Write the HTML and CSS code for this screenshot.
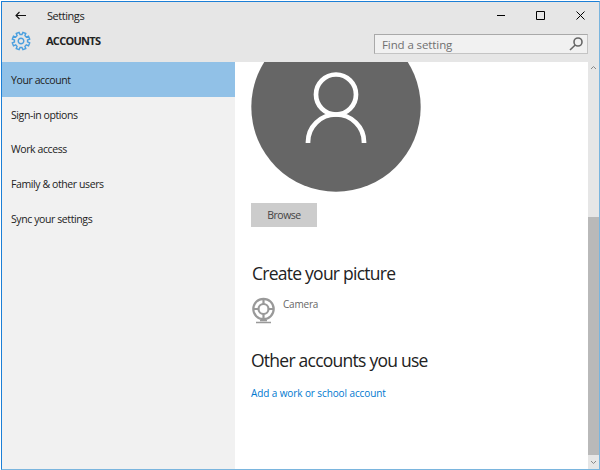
FILE: index.html
```html
<!DOCTYPE html>
<html lang="en">
<head>
<meta charset="utf-8">
<title>Settings</title>
<link rel="stylesheet" href="styles.css">
</head>
<body>
<div class="window">
  <header class="titlebar">
    <svg class="back" width="12" height="10" viewBox="0 0 12 10"><path d="M11 4.500H1M4.500 1L1 4.500l3.500 3.500"/></svg>
    <span class="title">Settings</span>
    <div class="controls">
      <svg width="10" height="10" viewBox="0 0 10 10"><path d="M1 4.500h8"/></svg>
      <svg width="10" height="10" viewBox="0 0 10 10"><path d="M.5 .5h8v8h-8z"/></svg>
      <svg width="10" height="10" viewBox="0 0 10 10"><path d="M.5 .5l8 8M8.500 .5l-8 8"/></svg>
    </div>
  </header>
  <div class="heading">
    <svg class="gear" width="20" height="20" viewBox="-10 -10 20 20">
      <path id="gear"/>
      <circle r="2.800"/>
    </svg>
    <h1>ACCOUNTS</h1>
    <div class="search">
      <span>Find a setting</span>
      <svg width="14" height="14" viewBox="0 0 14 14"><circle cx="9" cy="5" r="4"/><path d="M6.200 8L1 13"/></svg>
    </div>
  </div>
  <div class="body">
    <nav>
      <a class="active"><span>Your account</span></a>
      <a><span>Sign-in options</span></a>
      <a><span>Work access</span></a>
      <a><span>Family &amp; other users</span></a>
      <a><span>Sync your settings</span></a>
    </nav>
    <main>
      <svg class="avatar" width="170" height="130" viewBox="0 40 170 130">
        <circle class="disc" cx="85" cy="85" r="84.700"/>
        <circle class="person" cx="85" cy="72.500" r="20"/>
        <path class="person" d="M57 121v-1a28 27.500 0 0 1 56 0v1"/>
      </svg>
      <button>Browse</button>
      <h2 class="create">Create your picture</h2>
      <div class="camera">
        <svg width="24" height="28" viewBox="0 0 24 28">
          <circle cx="12.500" cy="13" r="10.200"/><circle cx="12.500" cy="13" r="5"/>
          <path d="M2 13h5M18 13h5M12.500 3v5M12.500 18v4"/>
          <path class="foot" d="M9 24.500h7M5 26.500h15"/>
        </svg>
        <span>Camera</span>
      </div>
      <h2 class="other">Other accounts you use</h2>
      <a class="link">Add a work or school account</a>
    </main>
    <div class="scrollbar">
      <svg width="7" height="5" viewBox="0 0 7 5"><path d="M1 4l2.500-2.500L6 4"/></svg>
      <div class="thumb"></div>
      <svg width="7" height="5" viewBox="0 0 7 5"><path d="M1 1l2.500 2.500L6 1"/></svg>
    </div>
  </div>
</div>
<script src="gear.js"></script>
</body>
</html>
```
FILE: styles.css
```css
* { box-sizing: border-box; }
body { margin: 0; background: #fff; font-family: "Open Sans", "Noto Sans", sans-serif; color: #222; }
svg { display: block; fill: none; flex: none; }
h1, h2 { margin: 0; }
span, h1, h2, .link { white-space: nowrap; }
.window { width: 599px; height: 469px; margin: 1px 0 0 1px; border: 1px solid #1c7fd6; border-right-color: #7ab5de; border-bottom-color: #7ab5de; background: #e6e6e6; display: flex; flex-direction: column; }
.titlebar { height: 28px; display: flex; align-items: center; padding: 0 13px 1px; }
.back { stroke: #111; stroke-width: 1.1; }
.title { margin-left: 20px; font-size: 11px; line-height: 16px; letter-spacing: -.45px; }
.controls { display: flex; gap: 30px; margin-left: auto; stroke: #000; stroke-width: 1; }
.heading { height: 32px; display: flex; align-items: flex-start; padding: 1px 11px 0 9px; }
.gear { stroke: #4a9fdf; stroke-width: 1.4; }
h1 { margin: 2px 0 0 15px; font-size: 11px; line-height: 16px; font-weight: 700; letter-spacing: -.72px; }
.search { margin: 3px 0 0 auto; width: 214px; height: 20px; border: 1px solid #a9a9a9; border-right-color: #c4c4c4; border-bottom-color: #c4c4c4; background: #f1f1f1; display: flex; align-items: center; justify-content: space-between; padding: 0 4px 0 7px; font-size: 11.5px; color: #707070; }
.search svg { stroke: #666; stroke-width: 1.6; }
.search span { letter-spacing: -.1px; }
.body { flex: 1; display: flex; min-height: 0; }
nav { width: 233px; background: #f1f1f1; }
nav a { display: flex; align-items: center; height: 34.6px; padding: 1px 0 0 9px; font-size: 10.5px; }
nav .active { height: 35px; background: #91c1e7; }
nav span { letter-spacing: -.4px; }
main { flex: 1; background: #fff; padding-left: 16px; overflow: hidden; }
.avatar .disc { fill: #666; }
.avatar .person { stroke: #fff; stroke-width: 4.7; }
button { display: block; width: 66px; height: 24px; margin-top: 11px; padding: 0; border: 0; background: #ccc; color: #444; font: 10.5px "Open Sans", sans-serif; letter-spacing: -.5px; }
h2 { font-size: 17.5px; line-height: 24px; font-weight: 400; letter-spacing: -.75px; }
.create { margin: 34px 0 0 1px; }
.camera { display: flex; gap: 8px; margin-top: 11px; height: 28px; color: #666; font-size: 10px; }
.camera svg { stroke: #999; stroke-width: 2.2; }
.camera .foot { stroke-width: 1.6; }
.camera span { line-height: 16px; letter-spacing: -.2px; }
.other { margin-top: 24px; }
.link { display: block; margin-top: 13px; font-size: 10px; line-height: 16px; letter-spacing: -.1px; color: #0078cf; }
.scrollbar { width: 11px; display: flex; flex-direction: column; align-items: center; padding: 3px 0 4px; stroke: #888; }
.thumb { width: 11px; height: 238px; margin: auto 0 5px; background: #b9b9b9; }
```
FILE: gear.js
```js
const points = [];
for (let i = 0; i < 8; i++) {
  for (const [offset, radius] of [[-14, 6.6], [-10, 8.9], [10, 8.9], [14, 6.6]]) {
    const angle = (i * 45 + 22.5 + offset) * Math.PI / 180;
    points.push((radius * Math.cos(angle)).toFixed(2) + " " + (radius * Math.sin(angle)).toFixed(2));
  }
}
document.getElementById("gear").setAttribute("d", "M" + points.join("L") + "Z");
```
